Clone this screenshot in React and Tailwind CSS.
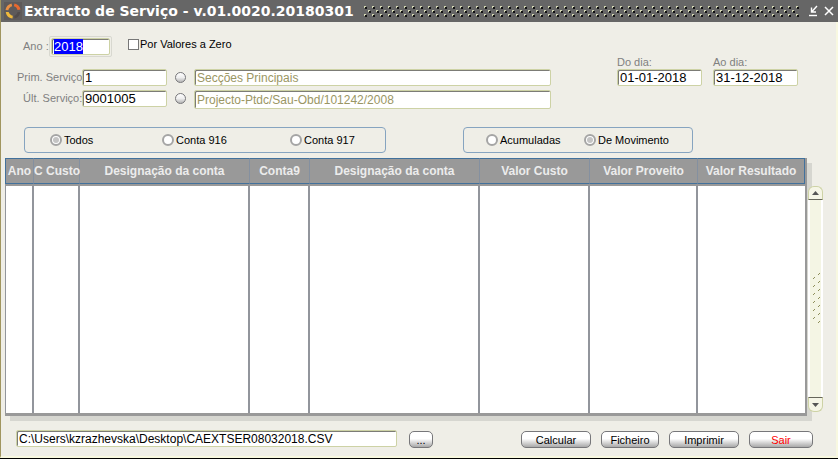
import React from "react";

const fieldBase =
  "min-w-0 rounded-[2px] border border-[#cdd2a5] bg-white pl-[2px] shadow-[inset_1px_1px_0_#7c7c76] outline-none selection:bg-[#0000ff] selection:text-white";

function Field({ className = "", ...props }) {
  return <input type="text" className={`${fieldBase} ${className}`} {...props} />;
}

function Lookup({ label }) {
  return (
    <button
      type="button"
      aria-label={label}
      className="h-[11px] w-[11px] shrink-0 rounded-full border border-[#77777a] bg-linear-to-b from-white via-[#eeeeee] to-[#b5b5b5]"
    />
  );
}

function Choice({ name, label, checked }) {
  return (
    <label className="flex items-center gap-[2px] whitespace-nowrap text-[11px] leading-3 text-black">
      <span className="grid h-3 w-3 place-items-center">
        <input
          type="radio"
          name={name}
          defaultChecked={checked}
          className="peer col-start-1 row-start-1 h-3 w-3 appearance-none rounded-full border-2 border-[#a5a5a5] bg-white"
        />
        <span className="pointer-events-none col-start-1 row-start-1 hidden h-[6px] w-[6px] rounded-full bg-[#c4c4c4] peer-checked:block" />
      </span>
      {label}
    </label>
  );
}

function Action({ children, className = "" }) {
  return (
    <button
      type="button"
      className={`h-[17px] shrink-0 rounded-[5px] border border-[#77777a] bg-linear-to-b from-white from-45% to-[#a9a9a9] text-[11px] leading-4 ${className}`}
    >
      {children}
    </button>
  );
}

function Logo() {
  return (
    <svg viewBox="0 0 18 18" className="h-[18px] w-[18px] shrink-0" aria-hidden="true">
      <rect width="18" height="18" fill="#5e5a5a" />
      <path d="M10.500 1.500 C13.500 2 16 4 16.500 7.500 L13.500 8 C13 6 12 5 9.800 4.300 Z" fill="#e8692f" />
      <path d="M7.500 1.500 C4 2.500 2 4.500 1.500 8 L4.300 8.300 C5 6 6 5 8.200 4.300 Z" fill="#e99045" />
      <path d="M1.800 10 C2.200 13.500 4.500 16 8.500 16.500 L8.800 13.800 C6.500 13 5.300 12 4.600 10 Z" fill="#efb93c" />
      <path d="M16.300 10 C15.800 13.500 13.500 16 10.500 16.500 L10.300 13.800 C12.300 13 13.200 12 13.600 10 Z" fill="#514b4b" />
    </svg>
  );
}

function Grip() {
  return (
    <svg className="h-3 min-w-0 flex-1" aria-hidden="true">
      <defs>
        <pattern id="grip" width="8" height="8" patternUnits="userSpaceOnUse">
          <rect x="1" y="2" width="2" height="2" fill="#111" />
          <rect x="0" y="1" width="2" height="2" fill="#111" />
          <rect x="0" y="1" width="2" height="1" fill="#d4d8b4" />
          <rect x="0" y="2" width="1" height="1" fill="#d4d8b4" />
          <rect x="5" y="6" width="2" height="2" fill="#111" />
          <rect x="4" y="5" width="2" height="1" fill="#d4d8b4" />
          <rect x="4" y="6" width="1" height="1" fill="#d4d8b4" />
        </pattern>
      </defs>
      <rect width="100%" height="12" fill="url(#grip)" />
    </svg>
  );
}

const columns = [
  { title: "Ano", width: "w-[29px]" },
  { title: "C Custo", width: "w-[46px]" },
  { title: "Designação da conta", width: "" },
  { title: "Conta9", width: "w-[60px]" },
  { title: "Designação da conta", width: "" },
  { title: "Valor Custo", width: "w-[110px]" },
  { title: "Valor Proveito", width: "w-[108px]" },
  { title: "Valor Resultado", width: "w-[107px]" },
];

function Scrollbar() {
  return (
    <div className="relative mt-[28px] mb-1 ml-px flex w-[15px] shrink-0 flex-col">
      <button
        type="button"
        aria-label="Subir"
        className="flex h-[14px] items-center justify-center rounded-t-[6px] border border-[#cdd2a5] border-b-[#66665a] bg-[#f5f5e6]"
      >
        <svg viewBox="0 0 7 4" className="h-1 w-[7px]"><path d="M0 4 L3.500 0 L7 4 Z" fill="#555" /></svg>
      </button>
      <div className="flex flex-1 items-center justify-center border-x-2 border-white bg-[#f4f5e4]">
        <svg viewBox="0 0 8 52" className="h-[52px] w-2" stroke="#8f8f5a" aria-hidden="true">
          <path d="M6 2l2-2M6 10l2-2M6 18l2-2M6 26l2-2M6 34l2-2M6 42l2-2M6 50l2-2M1 6l2-2M1 14l2-2M1 22l2-2M1 30l2-2M1 38l2-2M1 46l2-2" />
        </svg>
      </div>
      <button
        type="button"
        aria-label="Descer"
        className="flex h-[15px] items-center justify-center rounded-b-[6px] border border-[#cdd2a5] border-t-[#66665a] bg-[#f5f5e6]"
      >
        <svg viewBox="0 0 7 4" className="h-1 w-[7px]"><path d="M0 0 L7 0 L3.500 4 Z" fill="#555" /></svg>
      </button>
    </div>
  );
}

export default function App() {
  return (
    <div className="flex min-h-screen flex-col border-b border-black bg-[#efeee7] font-['Liberation_Sans',Arial,sans-serif]">
      <header className="flex h-[22px] items-center border-l border-[#a0955f] bg-[#666666] pr-1 pl-[3px] text-white">
        <Logo />
        <h1 className="mr-[10px] ml-[2px] whitespace-nowrap font-['DejaVu_Sans',Verdana,sans-serif] text-[14px] leading-5 font-bold">
          Extracto de Serviço - v.01.0020.20180301
        </h1>
        <Grip />
        <button type="button" aria-label="Minimizar" className="ml-2 h-3 w-[10px]">
          <svg viewBox="0 0 10 12" className="h-3 w-[10px]" fill="none" stroke="white">
            <path d="M9 1 L4 6.500 M3.500 2.500 V7 H8" strokeWidth="1.400" />
            <path d="M1 10.500 H9" strokeWidth="1.400" />
          </svg>
        </button>
        <button type="button" aria-label="Fechar" className="ml-[6px] h-3 w-[10px]">
          <svg viewBox="0 0 10 12" className="h-3 w-[10px]" fill="none" stroke="white" strokeWidth="1.500">
            <path d="M1 2 L9 10 M9 2 L1 10" />
          </svg>
        </button>
      </header>

      <main className="flex flex-1 flex-col border-r-2 border-b-2 border-l border-[#f8f8e0] border-l-[#a0955f]">
        <form className="contents" onSubmit={(e) => e.preventDefault()}>
          <section className="flex justify-between gap-[66px] pt-[14px] pr-[38px] pl-4">
            <div className="min-w-0 flex-1">
              <div className="flex items-center text-[11px]">
                <label htmlFor="ano" className="w-[32px] shrink-0 pl-[6px] whitespace-nowrap text-[#808080]">Ano :</label>
                <span className="flex rounded-[2px] border border-[#d8d8d0] p-px">
                  <Field
                    id="ano"
                    defaultValue="2018"
                    autoFocus
                    onFocus={(e) => e.target.select()}
                    className="h-[17px] w-[59px] text-[13px]"
                  />
                </span>
                <label className="ml-4 flex items-center gap-px self-start whitespace-nowrap text-black">
                  <input type="checkbox" className="h-[11px] w-[11px] appearance-none border border-[#777] bg-white" />
                  Por Valores a Zero
                </label>
              </div>
              <div className="mt-[12px] flex items-center">
                <label htmlFor="prim" className="w-[65px] shrink-0 whitespace-nowrap text-[11px] text-[#808080]">Prim. Serviço</label>
                <Field id="prim" defaultValue="1" className="h-[17px] w-[85px] text-[13px]" />
                <span className="mx-2 flex"><Lookup label="Procurar primeiro serviço" /></span>
                <Field aria-label="Designação do primeiro serviço" defaultValue="Secções Principais" className="h-[17px] flex-1 text-[12px] text-[#9a9664]" />
              </div>
              <div className="mt-[4px] flex items-start">
                <label htmlFor="ult" className="w-[65px] shrink-0 pl-[6px] whitespace-nowrap text-[11px] leading-4 text-[#808080]">Últ. Serviço:</label>
                <Field id="ult" defaultValue="9001005" className="h-[17px] w-[85px] text-[13px]" />
                <span className="mx-2 flex pt-[3px]"><Lookup label="Procurar último serviço" /></span>
                <Field aria-label="Designação do último serviço" defaultValue="Projecto-Ptdc/Sau-Obd/101242/2008" className="h-[19px] flex-1 text-[12px] text-[#9a9664]" />
              </div>
            </div>
            <div className="flex gap-[11px] pt-[20px] text-[11px] text-[#808080]">
              <label className="flex flex-col leading-[13px]">
                Do dia:
                <Field defaultValue="01-01-2018" className="h-[17px] w-[85px] text-[13px] text-black" />
              </label>
              <label className="flex flex-col leading-[13px]">
                Ao dia:
                <Field defaultValue="31-12-2018" className="h-[17px] w-[85px] text-[13px] text-black" />
              </label>
            </div>
          </section>

          <section className="mt-[18px] flex gap-[77px] pl-[23px]">
            <div role="radiogroup" aria-label="Conta" className="grid h-[26px] w-[362px] grid-cols-[112px_128px_auto] items-center rounded-[4px] border border-[#86a4c0] pl-[25px]">
              <Choice name="conta" label="Todos" checked />
              <Choice name="conta" label="Conta 916" />
              <Choice name="conta" label="Conta 917" />
            </div>
            <div role="radiogroup" aria-label="Tipo" className="grid h-[26px] w-[230px] grid-cols-[98px_auto] items-center rounded-[4px] border border-[#86a4c0] pl-[22px]">
              <Choice name="tipo" label="Acumuladas" />
              <Choice name="tipo" label="De Movimento" checked />
            </div>
          </section>

          <section className="mt-[5px] flex pr-[13px] pl-1">
            <div className="min-w-0 flex-1 border-r-2 border-b-[3px] border-[#999] shadow-[5px_5px_0_#d6d6d0]">
              <table className="w-full table-fixed border-separate border-spacing-0">
                <thead>
                  <tr className="h-[26px]">
                    {columns.map((c, i) => (
                      <th
                        key={i}
                        scope="col"
                        className={`${c.width} border-y border-r border-y-[#42719c] border-r-[#8490a0] bg-[#999] p-0 text-center text-[12px] leading-4 font-bold whitespace-nowrap text-[#ececec] first:border-l first:border-l-[#42719c] last:border-r-[#42719c]`}
                      >
                        {c.title}
                      </th>
                    ))}
                  </tr>
                </thead>
                <tbody>
                  <tr className="h-[229px]">
                    {columns.map((c, i) => (
                      <td key={i} className="border-t-2 border-r-2 border-[#92959c] border-t-[#999] bg-white first:border-l last:border-r-0" />
                    ))}
                  </tr>
                </tbody>
              </table>
            </div>
            <Scrollbar />
          </section>

          <footer className="mt-[14px] flex items-start pr-[23px] pb-2 pl-[15px] text-black">
            <Field aria-label="Ficheiro de saída" defaultValue="C:\Users\kzrazhevska\Desktop\CAEXTSER08032018.CSV" className="h-[17px] flex-1 text-[12px]" />
            <div className="flex pt-px pl-3">
              <Action className="w-6">...</Action>
            </div>
            <div className="flex gap-[10px] pt-px pl-[88px]">
              <Action className="w-[70px]">Calcular</Action>
              <Action className="w-[58px]">Ficheiro</Action>
              <Action className="w-[70px]">Imprimir</Action>
              <Action className="w-[64px] text-[#ff0000]">Sair</Action>
            </div>
          </footer>
        </form>
      </main>
    </div>
  );
}
